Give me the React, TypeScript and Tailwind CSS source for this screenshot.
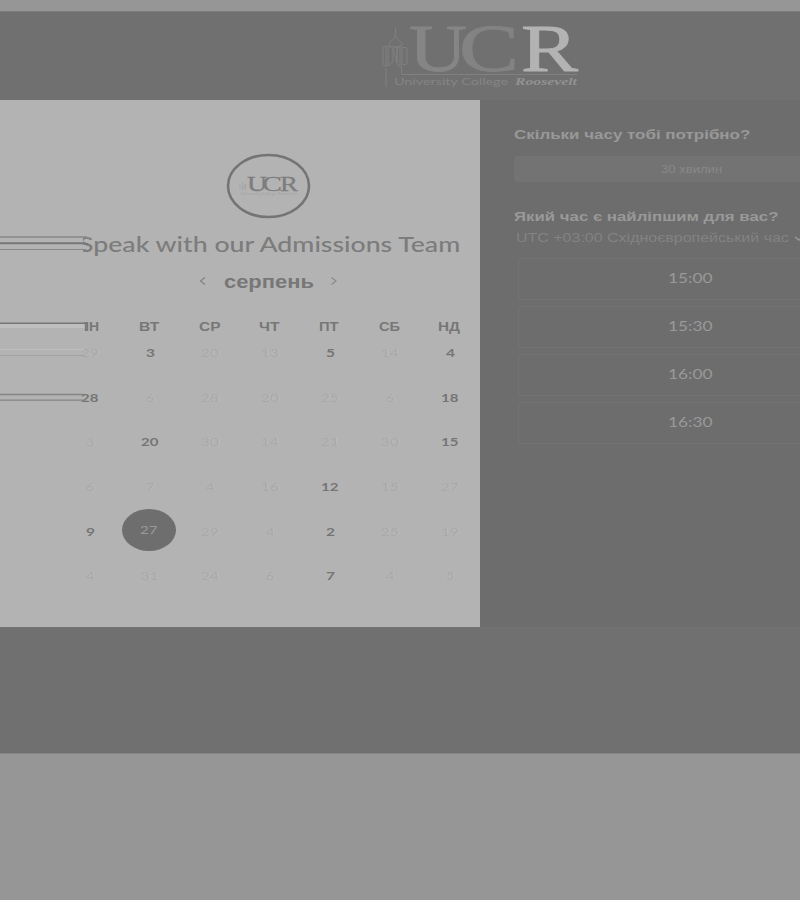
import React from "react";

type LineProps = { text: string; width: number; size: number; className?: string; family?: string; weight?: number; height?: number };

/** A single line of text set to an exact measure. */
function Line({ text, width, size, className = "", family = "Lato, sans-serif", weight = 400, height = 24 }: LineProps) {
  const box = React.useRef<HTMLSpanElement>(null);
  const [scale, setScale] = React.useState(1);
  React.useLayoutEffect(() => {
    if (box.current) setScale(width / box.current.offsetWidth);
  }, [width, text]);
  return (
    <span className={`block shrink-0 whitespace-nowrap ${className}`} style={{ width, height }}>
      <span
        ref={box}
        className="block w-max origin-left"
        style={{ transform: `scaleX(${scale})`, fontSize: size, lineHeight: `${height}px`, fontFamily: family, fontWeight: weight }}
      >
        {text}
      </span>
    </span>
  );
}

const ARIAL = '"Liberation Sans", Arial, sans-serif';

const weekdays: [string, number][] = [["ПН", 20], ["ВТ", 20], ["СР", 21], ["ЧТ", 20], ["ПТ", 20], ["СБ", 21], ["НД", 22]];

const weeks: string[][] = [
  ["29", "3", "20", "13", "5", "14", "4"],
  ["28", "6", "28", "20", "25", "6", "18"],
  ["3", "20", "30", "14", "21", "30", "15"],
  ["6", "7", "4", "16", "12", "15", "27"],
  ["9", "27", "29", "4", "2", "25", "19"],
  ["4", "31", "24", "6", "7", "4", "5"],
];
const open = new Set(["0-1", "0-4", "0-6", "1-0", "1-6", "2-1", "2-6", "3-4", "4-0", "4-4", "5-4"]);

function HeaderLogo() {
  return (
    <svg className="ml-[380px] mt-3 h-[68px] w-[200px] overflow-visible" viewBox="380 24 200 68" fill="none">
      <g stroke="#808080" strokeWidth="1">
        <path d="M395.5 28v8M395.5 35l-2 4-4.5 4v2l3 2h7l3-2v-2l-4.500-4-2-4" />
        <path d="M386 68v19" />
        <path d="M383 47v17l3 3V46zM388 46v20l5-4V49zM393 47l4 16V47zM397 48v16l3 3V46l-3 2M402 47v18l5-1V48zM401.500 66v8.500H578" />
      </g>
      <g fontFamily='"Liberation Serif", serif' strokeWidth="0.8">
        <text x="409" y="71" fontSize="68" fill="#858585" stroke="#858585" textLength="58" lengthAdjust="spacingAndGlyphs">U</text>
        <text x="459" y="71" fontSize="68" fill="#838383" stroke="#838383" textLength="60" lengthAdjust="spacingAndGlyphs">C</text>
        <text x="521" y="71" fontSize="68" fill="#b3b3b3" stroke="#b3b3b3" textLength="57" lengthAdjust="spacingAndGlyphs">R</text>
      </g>
      <text x="394" y="85" fontSize="9" fontFamily="Lato, sans-serif" fill="#858585" textLength="114" lengthAdjust="spacingAndGlyphs">University College</text>
      <text x="515" y="85" fontSize="11" fontFamily='"Liberation Serif", serif' fontWeight="700" fontStyle="italic" fill="#929292" textLength="62" lengthAdjust="spacingAndGlyphs">Roosevelt</text>
    </svg>
  );
}

function RoundLogo() {
  return (
    <svg className="ml-[226px] mt-[53px] h-[66px] w-[86px] shrink-0" viewBox="226 153 86 66" fill="none">
      <ellipse cx="268.5" cy="186" rx="40.5" ry="31" stroke="#747474" strokeWidth="2.6" />
      <path d="M240 184v6M242.500 182v8l3-6v6" stroke="#a5a5a5" />
      <g fontFamily='"Liberation Serif", serif' fontSize="22" fill="#7d7d7d" stroke="#7d7d7d" strokeWidth="0.3">
        <text x="247" y="191" textLength="20" lengthAdjust="spacingAndGlyphs">U</text>
        <text x="262" y="191" textLength="20" lengthAdjust="spacingAndGlyphs">C</text>
        <text x="280" y="191" textLength="18" lengthAdjust="spacingAndGlyphs">R</text>
      </g>
      <text x="241" y="195" fontSize="4" fontFamily="Lato, sans-serif" fill="#a3a3a3" textLength="56" lengthAdjust="spacingAndGlyphs">University College Roosevelt</text>
    </svg>
  );
}

function Streaks() {
  return (
    <div className="absolute left-0 top-0">
      <svg className="block" width="92" height="310" viewBox="0 100 92 310" fill="none">
        <path d="M70 234h13v20H70zM70 320h14.500v13H70z" fill="#b3b3b3" />
        <path d="M0 237H86l4 2" stroke="#888" strokeWidth="1.5" />
        <path d="M0 243.200H84l4 1" stroke="#777" strokeWidth="2" />
        <path d="M0 249.500H84l3 .5" stroke="#8a8a8a" strokeWidth="1.2" />
        <path d="M0 323.200H86" stroke="#777" strokeWidth="1.5" />
        <path d="M0 324h84.500v4H0z" fill="#bebebe" />
        <path d="M85.600 322.500v8.500" stroke="#7c7c7c" strokeWidth="1.5" />
        <path d="M0 349.500H84" stroke="#bebebe" />
        <path d="M0 355.500H84" stroke="#a0a0a0" />
        <path d="M0 394.500H84" stroke="#858585" strokeWidth="1.3" />
        <path d="M0 400.200H85" stroke="#858585" strokeWidth="1.3" />
      </svg>
    </div>
  );
}

export default function App() {
  return (
    <main className="flex h-[900px] w-[800px] flex-col overflow-hidden bg-[#969696] pt-[11px]">
      <header className="h-[89px] shrink-0 border-t border-[#7c7c7c] bg-[#707070]">
        <HeaderLogo />
      </header>
      <div className="flex h-[527px] shrink-0 bg-[#6d6d6d]">
        <section className="relative flex w-[480px] flex-col bg-[#b3b3b3]">
          <RoundLogo />
          <Line className="ml-[79px] mt-[13px] text-[#7c7c7c]" text="Speak with our Admissions Team" width={381} size={20.5} height={24} weight={500} />
          <div className="mt-[13px] flex h-6 items-center text-[#777]">
            <svg className="ml-[199px] h-3 w-2" viewBox="0 0 8 12" fill="none" stroke="#828282" strokeWidth="1.2"><path d="M6 2.500 1.500 6 6 9.500" /></svg>
            <Line className="ml-[17px]" text="серпень" width={90} size={18.5} family={ARIAL} weight={700} height={23} />
            <svg className="ml-4 h-3 w-2" viewBox="0 0 8 12" fill="none" stroke="#8a8a8a" strokeWidth="1.2"><path d="M1.500 2.500 6 6l-4.500 3.500" /></svg>
          </div>
          <div className="ml-[59px] mt-6 grid h-5 w-[420px] grid-cols-7 text-[#777]">
            {weekdays.map(([d, w]) => (
              <div key={d} className="flex items-center justify-center">
                <Line text={d} width={w} size={12.5} family={ARIAL} weight={700} height={20} />
              </div>
            ))}
          </div>
          <div className="ml-[60px] mt-[-6px] grid w-[420px] grid-cols-7">
            {weeks.map((week, r) =>
              week.map((day, c) => {
                const key = `${r}-${c}`;
                const picked = key === "4-1";
                const isOpen = open.has(key);
                const tone = picked
                  ? "text-[#999]"
                  : isOpen
                    ? "text-[#757575]"
                    : "text-[#a9a9a9] [text-shadow:1px_0_0_#bcbcbc]";
                return (
                  <div key={key} className="flex h-[44.6px] items-center justify-center">
                    <div className={picked ? "mr-0.5 mt-[-4px] flex h-[42px] w-[54px] items-center justify-center rounded-[50%] bg-[#6e6e6e]" : "flex"}>
                      <Line
                        className={tone}
                        text={day}
                        width={day.length === 2 ? 17.5 : 9}
                        size={isOpen || picked ? 12 : 11.5}
                        height={20}
                        weight={isOpen ? 700 : 400}
                      />
                    </div>
                  </div>
                );
              }),
            )}
          </div>
          <Streaks />
        </section>
        <section className="flex w-[320px] flex-col pl-[34px] pt-[25px]">
          <Line className="text-[#999]" text="Скільки часу тобі потрібно?" width={236} size={13.5} family={ARIAL} weight={700} height={20} />
          <div className="mt-[11px] flex h-[26px] items-center rounded-l-sm bg-[#737373] pl-[147px] text-[#888]">
            <Line text="30 хвилин" width={61} size={10.5} family={ARIAL} height={24} />
          </div>
          <Line className="mt-[25px] text-[#999]" text="Який час є найліпшим для вас?" width={265} size={13.5} family={ARIAL} weight={700} height={20} />
          <div className="flex items-center pl-0.5 text-[#838383]">
            <Line text="UTC +03:00 Східноєвропейський час" width={273} size={12} family={ARIAL} height={22} />
            <svg className="ml-[5px] h-2 w-3 shrink-0" viewBox="0 0 12 8" fill="none" stroke="#999" strokeWidth="1.5"><path d="m1 3 4 3 4-3" /></svg>
          </div>
          <div className="ml-1 mt-[9px] flex flex-col gap-[6px]">
            {["15:00", "15:30", "16:00", "16:30"].map((t) => (
              <div key={t} className="flex h-[42px] items-center rounded-l-sm border border-r-0 border-[#737373] pb-0.5 pl-[149px] text-[#999]">
                <Line text={t} width={44} size={13} height={22} />
              </div>
            ))}
          </div>
        </section>
      </div>
      <footer className="h-[127px] shrink-0 border-b border-t border-b-[#858585] border-t-[#737373] bg-[#707070]" />
    </main>
  );
}
